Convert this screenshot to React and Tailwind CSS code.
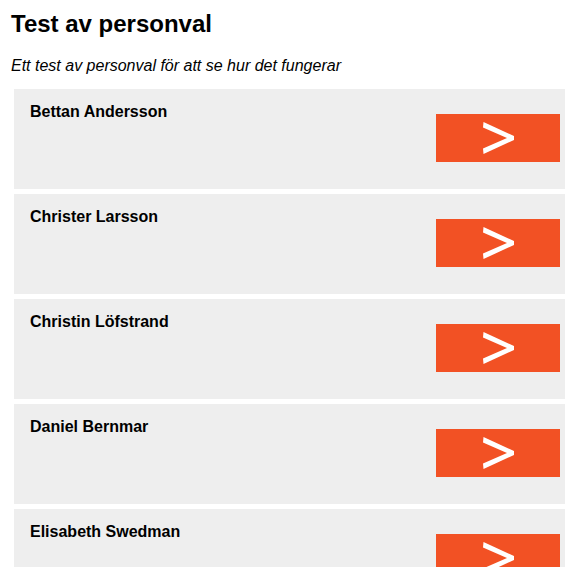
const people = [
  'Bettan Andersson',
  'Christer Larsson',
  'Christin Löfstrand',
  'Daniel Bernmar',
  'Elisabeth Swedman',
]

function Chevron() {
  return (
    <svg width="31" height="32" viewBox="0 0 31 32" className="block">
      <polygon points="0.5,0 31,14 31,18 0.5,32 0,26.5 24,16 0,5.5" fill="#ffffff" />
    </svg>
  )
}

export default function App() {
  return (
    <div className="h-[570px] bg-white">
      <div className="h-[567px] overflow-hidden text-black pt-[10px] pl-[11px] pr-[11px] font-['Liberation_Sans',Arial,sans-serif]">
        <h1 className="text-[24px] leading-[28px] font-bold">Test av personval</h1>
        <p className="mt-[19px] text-[16px] leading-[18px] italic">
          Ett test av personval för att se hur det fungerar
        </p>

        <ul className="mt-[14px] ml-[3px] flex flex-col gap-[5px]">
          {people.map((name) => (
            <li
              key={name}
              className="h-[100px] shrink-0 bg-[#eeeeee] flex justify-between items-start pt-[14px] pl-[16px] pr-[5px]"
            >
              <span className="text-[16px] leading-[18px] font-bold">{name}</span>
              <button className="mt-[11px] w-[124px] h-[48px] bg-[#f25124] flex items-center justify-center">
                <Chevron />
              </button>
            </li>
          ))}
        </ul>
      </div>
    </div>
  )
}
